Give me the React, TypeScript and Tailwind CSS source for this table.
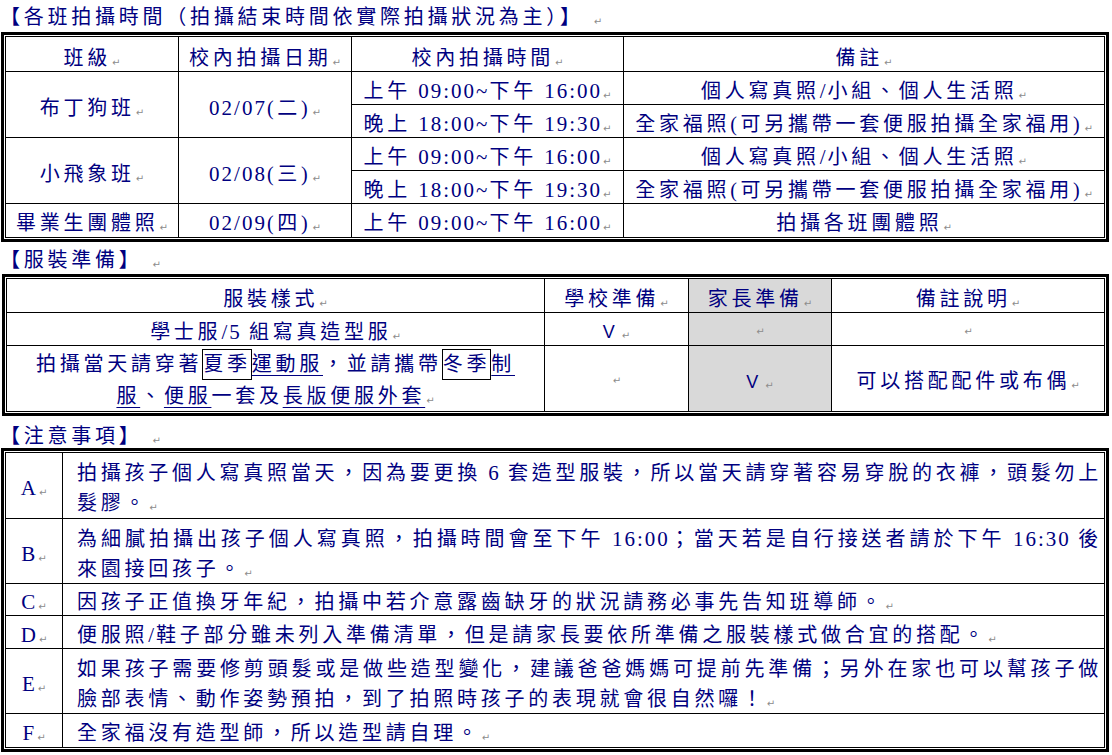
import type { ReactNode } from 'react';
import { twMerge } from 'tailwind-merge';

// Word 的段落標記
function Mark({ wide = false }: { wide?: boolean }) {
  return (
    <span
      className={twMerge(
        "ml-[1px] inline-block align-[-1px] [font-family:'DejaVu_Sans',sans-serif] text-[10px] font-normal leading-none tracking-normal text-[#8c8c8c]",
        wide && 'ml-[10px]',
      )}
    >
      ↵
    </span>
  );
}

// 半形字元（數字、斜線）字距較窄，中文字距較寬
function Tx({ s }: { s: string }) {
  const parts = s.split(/([\x20-\x27\x2a-\x7e]+)/);
  return (
    <>
      {parts.map((p, i) =>
        i % 2 === 1 ? (
          <span key={i} className="text-[21px] tracking-[2px]">
            {p}
          </span>
        ) : (
          p
        ),
      )}
    </>
  );
}

function Heading({ text, className }: { text: string; className?: string }) {
  return (
    <div className={twMerge('h-[32px] whitespace-nowrap leading-[32px]', className)}>
      <Tx s={text} />
      <Mark wide />
    </div>
  );
}

function Frame({
  className,
  grid,
  children,
}: {
  className?: string;
  grid: string;
  children: ReactNode;
}) {
  return (
    <div className={twMerge('border-[3px] border-black p-px', className)}>
      <div className={twMerge('grid gap-px border border-black bg-black', grid)}>{children}</div>
    </div>
  );
}

function C({
  s,
  className,
  children,
}: {
  s?: string;
  className?: string;
  children?: ReactNode;
}) {
  return (
    <div
      className={twMerge(
        'flex items-center justify-center whitespace-nowrap bg-white pt-[5px] leading-[30px]',
        className,
      )}
    >
      {s !== undefined ? (
        <span>
          <Tx s={s} />
          <Mark />
        </span>
      ) : (
        children
      )}
    </div>
  );
}

function Check() {
  return (
    <span>
      <span className="[font-family:'Liberation_Sans',sans-serif] text-[18px] font-normal tracking-normal">V</span>
      <span className="ml-[6px]">
        <Mark />
      </span>
    </span>
  );
}

function Note({ lines }: { lines: string[] }) {
  return (
    <div className="flex flex-col justify-center whitespace-nowrap bg-white pl-[14px] pr-0 pt-[5px] leading-[30px]">
      {lines.map((line, i) =>
        i < lines.length - 1 ? (
          <div key={i} className="pr-[2px] [text-align-last:justify]">
            <Tx s={line} />
          </div>
        ) : (
          <div key={i}>
            <Tx s={line} />
            <Mark />
          </div>
        ),
      )}
    </div>
  );
}

function U({ children }: { children: ReactNode }) {
  return <span className="underline decoration-[#000080] decoration-1 underline-offset-[4px]">{children}</span>;
}

function Boxed({ children }: { children: ReactNode }) {
  return <span className="inline-block border border-black leading-[29px]">{children}</span>;
}

const schedule = [
  {
    name: '布丁狗班',
    date: '02/07(二)',
    slots: [
      ['上午 09:00~下午 16:00', '個人寫真照/小組、個人生活照'],
      ['晚上 18:00~下午 19:30', '全家福照(可另攜帶一套便服拍攝全家福用)'],
    ],
  },
  {
    name: '小飛象班',
    date: '02/08(三)',
    slots: [
      ['上午 09:00~下午 16:00', '個人寫真照/小組、個人生活照'],
      ['晚上 18:00~下午 19:30', '全家福照(可另攜帶一套便服拍攝全家福用)'],
    ],
  },
];

const notes: { key: string; lines: string[] }[] = [
  {
    key: 'A',
    lines: [
      '拍攝孩子個人寫真照當天，因為要更換 6 套造型服裝，所以當天請穿著容易穿脫的衣褲，頭髮勿上',
      '髮膠。',
    ],
  },
  {
    key: 'B',
    lines: [
      '為細膩拍攝出孩子個人寫真照，拍攝時間會至下午 16:00；當天若是自行接送者請於下午 16:30 後',
      '來園接回孩子。',
    ],
  },
  { key: 'C', lines: ['因孩子正值換牙年紀，拍攝中若介意露齒缺牙的狀況請務必事先告知班導師。'] },
  { key: 'D', lines: ['便服照/鞋子部分雖未列入準備清單，但是請家長要依所準備之服裝樣式做合宜的搭配。'] },
  {
    key: 'E',
    lines: [
      '如果孩子需要修剪頭髮或是做些造型變化，建議爸爸媽媽可提前先準備；另外在家也可以幫孩子做',
      '臉部表情、動作姿勢預拍，到了拍照時孩子的表現就會很自然囉！',
    ],
  },
  { key: 'F', lines: ['全家福沒有造型師，所以造型請自理。'] },
];

export default function App() {
  return (
    <div className="min-h-[755px] w-[1112px] overflow-hidden bg-white [font-family:'Liberation_Serif','Noto_Sans_CJK_TC',serif] text-[20px] font-normal tracking-[3.75px] text-[#000080]">
      <Heading text="【各班拍攝時間（拍攝結束時間依實際拍攝狀況為主）】" className="pt-[1px]" />
      <Frame
        className="ml-[1px] w-[1108px]"
        grid="grid-cols-[172px_172px_271px_480px] grid-rows-[34px_32px_32px_32px_32px_33px]"
      >
        <C s="班級" className="pt-[7px]" />
        <C s="校內拍攝日期" className="pt-[7px]" />
        <C s="校內拍攝時間" className="pt-[7px]" />
        <C s="備註" className="pt-[7px]" />
        {schedule.map((row) => (
          <>
            <C key={row.name} s={row.name} className="row-span-2 pt-[7px]" />
            <C key={row.date} s={row.date} className="row-span-2 pt-[7px]" />
            {row.slots.map(([time, note]) => (
              <>
                <C key={time} s={time} />
                <C key={note} s={note} />
              </>
            ))}
          </>
        ))}
        <C s="畢業生團體照" />
        <C s="02/09(四)" />
        <C s="上午 09:00~下午 16:00" />
        <C s="拍攝各班團體照" />
      </Frame>

      <Heading text="【服裝準備】" className="pt-[2px]" />
      <Frame
        className="ml-[2px] w-[1107px]"
        grid="grid-cols-[537px_143px_142px_272px] grid-rows-[33px_32px_65px]"
      >
        <C s="服裝樣式" className="pt-[7px]" />
        <C s="學校準備" className="pt-[7px]" />
        <C s="家長準備" className="bg-[#d9d9d9] pt-[7px]" />
        <C s="備註說明" className="pt-[7px]" />

        <C s="學士服/5 組寫真造型服" />
        <C>
          <Check />
        </C>
        <C className="bg-[#d9d9d9]">
          <Mark />
        </C>
        <C>
          <Mark />
        </C>

        <C className="flex-col pt-[2px] leading-[32px]">
          <div>
            拍攝當天請穿著<Boxed>夏季</Boxed>
            <U>運動服</U>，並請攜帶<Boxed>冬季</Boxed>
            <U>制</U>
          </div>
          <div>
            <U>服</U>、<U>便服</U>一套及<U>長版便服外套</U>
            <Mark />
          </div>
        </C>
        <C>
          <Mark />
        </C>
        <C className="bg-[#d9d9d9]">
          <Check />
        </C>
        <C s="可以搭配配件或布偶" />
      </Frame>

      <Heading text="【注意事項】" className="pt-[4px]" />
      <Frame
        className="ml-[1px] w-[1108px]"
        grid="grid-cols-[56px_1041px] grid-rows-[65px_64px_31px_32px_64px_33px]"
      >
        {notes.map((n) => (
          <>
            <C key={n.key} s={n.key} />
            <Note key={n.key + '-text'} lines={n.lines} />
          </>
        ))}
      </Frame>
    </div>
  );
}
